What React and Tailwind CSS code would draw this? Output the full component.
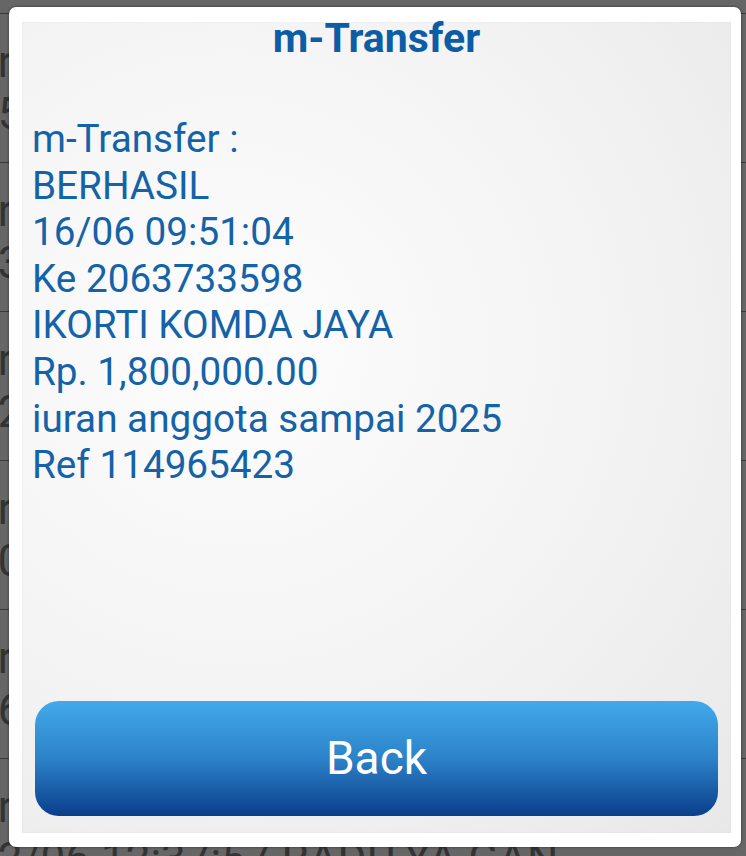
import React from 'react';

const rows = [
    { top: 'Transfer 15/06', bottom: '15/06 08:12:40 SITI RAHAYU' },
    { top: 'Transfer 13/06', bottom: '13/06 14:05:21 AHMAD FAUZI' },
    { top: 'Transfer 12/06', bottom: '12/06 16:44:09 DEWI LESTARI' },
    { top: 'Transfer 10/06', bottom: '10/06 11:20:38 BUDI SANTOSO' },
    { top: 'Transfer 06/06', bottom: '06/06 09:02:17 RINA WULAN' },
    { top: 'Transfer 12/06', bottom: '12/06 12:37:57 RADITYA GAN' },
];

const lines = [
    'm-Transfer :',
    'BERHASIL',
    '16/06 09:51:04',
    'Ke 2063733598',
    'IKORTI KOMDA JAYA',
    'Rp. 1,800,000.00',
    'iuran anggota sampai 2025',
    'Ref 114965423',
];

const App = () => {
    return (
        <div className="relative w-[746px] h-[856px] overflow-hidden bg-[#666666] font-['Roboto',sans-serif]">
            {/* dimmed history list behind the dialog */}
            <div className="pt-[13px]">
                {rows.map((r, i) => (
                    <div key={i} className="h-[149px] border-t border-[#3a3a3a] pt-[22px]">
                        <div className="-ml-[27px] text-[44px] leading-[52px] text-[#333333] whitespace-nowrap">{r.top}</div>
                        <div className="-ml-[27px] text-[44px] leading-[52px] text-[#333333] whitespace-nowrap">{r.bottom}</div>
                    </div>
                ))}
            </div>

            {/* dialog */}
            <div className="absolute left-[9px] top-[7px] w-[732px] h-[840px] bg-white rounded-[7px] shadow-[0_0_3px_rgba(0,0,0,0.5)] pl-[13px] pr-[10px] pt-[15px] pb-[14px]">
                <div className="h-full flex flex-col bg-[radial-gradient(ellipse_at_30%_40%,#fdfdfd_0%,#f3f3f3_55%,#e8e8e8_100%)] shadow-[inset_0_0_3px_rgba(0,0,0,0.05)] px-[10px] pb-[17px]">
                    <h1 className="-mt-[4px] text-center text-[41px] leading-none font-bold text-[#0c5ca6]">m-Transfer</h1>
                    <div className="mt-[57px] text-[38.7px] leading-[46.6px] text-[#1462a8]">
                        {lines.map((l, i) => (
                            <div key={i}>{l}</div>
                        ))}
                    </div>
                    <button className="mt-auto mx-[3px] h-[115px] rounded-[24px] bg-[linear-gradient(to_bottom,#42aaea_0%,#2c82c8_50%,#0a3e8b_100%)] text-white text-[46px] flex items-center justify-center">
                        Back
                    </button>
                </div>
            </div>
        </div>
    );
};

export default App;
